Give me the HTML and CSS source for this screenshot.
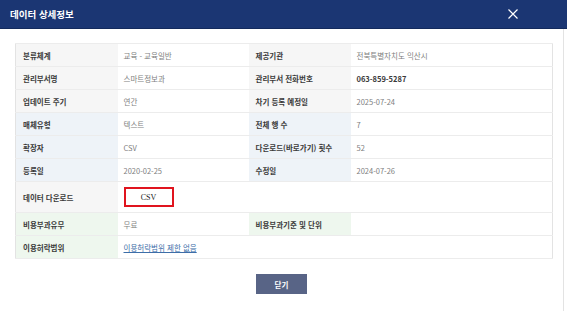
FILE: index.html
```html
<!DOCTYPE html>
<html lang="ko">
<head>
    <meta charset="UTF-8">
    <meta name="viewport" content="width=device-width, initial-scale=1.0">
    <title>데이터 상세정보</title>
    <link rel="stylesheet" href="styles.css">
</head>
<body>
    <div class="modal">
        <div class="modal-header">
            <h1>데이터 상세정보</h1>
            <button class="close-x" type="button" aria-label="닫기">
                <svg width="10" height="10" viewBox="0 0 10 10">
                    <path d="M0.5 0.5 L9.5 9.5 M9.5 0.5 L0.5 9.5" stroke="#fff" stroke-width="1.2" fill="none"/>
                </svg>
            </button>
        </div>
        <div class="modal-body">
            <table class="info-table">
                <colgroup>
                    <col class="col-label">
                    <col class="col-value">
                    <col class="col-label">
                    <col class="col-value-wide">
                </colgroup>
                <tr>
                    <th class="gray">분류체계</th>
                    <td>교육 - 교육일반</td>
                    <th class="gray">제공기관</th>
                    <td>전북특별자치도 익산시</td>
                </tr>
                <tr>
                    <th class="gray">관리부서명</th>
                    <td>스마트정보과</td>
                    <th class="gray">관리부서 전화번호</th>
                    <td class="strong">063-859-5287</td>
                </tr>
                <tr>
                    <th class="gray">업데이트 주기</th>
                    <td>연간</td>
                    <th class="gray">차기 등록 예정일</th>
                    <td>2025-07-24</td>
                </tr>
                <tr>
                    <th class="blue">매체유형</th>
                    <td>텍스트</td>
                    <th class="blue">전체 행 수</th>
                    <td>7</td>
                </tr>
                <tr>
                    <th class="blue">확장자</th>
                    <td>CSV</td>
                    <th class="blue">다운로드(바로가기) 횟수</th>
                    <td>52</td>
                </tr>
                <tr>
                    <th class="blue">등록일</th>
                    <td>2020-02-25</td>
                    <th class="blue">수정일</th>
                    <td>2024-07-26</td>
                </tr>
                <tr class="tall">
                    <th class="gray">데이터 다운로드</th>
                    <td colspan="3"><button class="csv-btn" type="button">CSV</button></td>
                </tr>
                <tr>
                    <th class="green">비용부과유무</th>
                    <td>무료</td>
                    <th class="green">비용부과기준 및 단위</th>
                    <td></td>
                </tr>
                <tr>
                    <th class="green">이용허락범위</th>
                    <td colspan="3"><a href="#">이용허락범위 제한 없음</a></td>
                </tr>
            </table>
            <div class="actions">
                <button class="close-btn" type="button">닫기</button>
            </div>
        </div>
    </div>
</body>
</html>
```

FILE: styles.css
```css
body {
    margin: 0;
    font-family: "Noto Sans CJK KR", "Noto Sans", sans-serif;
    background-color: #ffffff;
}
.modal {
    width: 567px;
    height: 311px;
    overflow: hidden;
}
.modal-header {
    height: 29px;
    background-color: #1b3673;
    border-bottom: 1px solid #132a5c;
    display: flex;
    align-items: center;
    justify-content: space-between;
    padding: 0 49px 0 10px;
    box-sizing: border-box;
}
.modal-header h1 {
    margin: 0;
    color: #ffffff;
    font-size: 9.5px;
    font-weight: 700;
}
.close-x {
    background: none;
    border: none;
    padding: 0;
    display: flex;
}
.modal-body {
    padding: 14px 15px 0 15px;
    margin-right: 3px;
    border-right: 1px solid #e3e3e3;
    height: 282px;
    box-sizing: border-box;
    margin-right: 3px;
}
.info-table {
    width: 537px;
    border-collapse: collapse;
    table-layout: fixed;
    border: 1px solid #e3e3e3;
    font-size: 7.5px;
}
.col-label {
    width: 102px;
}
.col-value {
    width: 131px;
}
.col-value-wide {
    width: 202px;
}
.info-table tr {
    height: 23px;
}
.info-table tr.tall {
    height: 31px;
}
.info-table th,
.info-table td {
    border-top: 1px solid #ececec;
    border-bottom: 1px solid #ececec;
    text-align: left;
    padding: 0 6px;
    white-space: nowrap;
}
.info-table th {
    font-weight: 700;
    color: #3a3a3a;
    padding-left: 7px;
}
.info-table td {
    color: #808080;
    background-color: #ffffff;
}
.info-table td.strong {
    color: #3a3a3a;
    font-weight: 700;
}
.gray {
    background-color: #f6f6f6;
}
.blue {
    background-color: #eef3f8;
}
.green {
    background-color: #eef7ee;
}
.info-table a {
    color: #3d6ea8;
    text-decoration: underline;
}
.csv-btn {
    width: 50px;
    height: 20px;
    border: 2px solid #e0141e;
    background-color: #ffffff;
    color: #222222;
    font-family: "Liberation Serif", serif;
    font-size: 8px;
    padding: 0;
}
.actions {
    display: flex;
    justify-content: center;
    margin-top: 15px;
}
.close-btn {
    width: 51px;
    height: 20px;
    border: none;
    background-color: #586486;
    color: #ffffff;
    font-family: "Noto Sans CJK KR", sans-serif;
    font-size: 7.5px;
    font-weight: 700;
    padding: 0;
}
```
